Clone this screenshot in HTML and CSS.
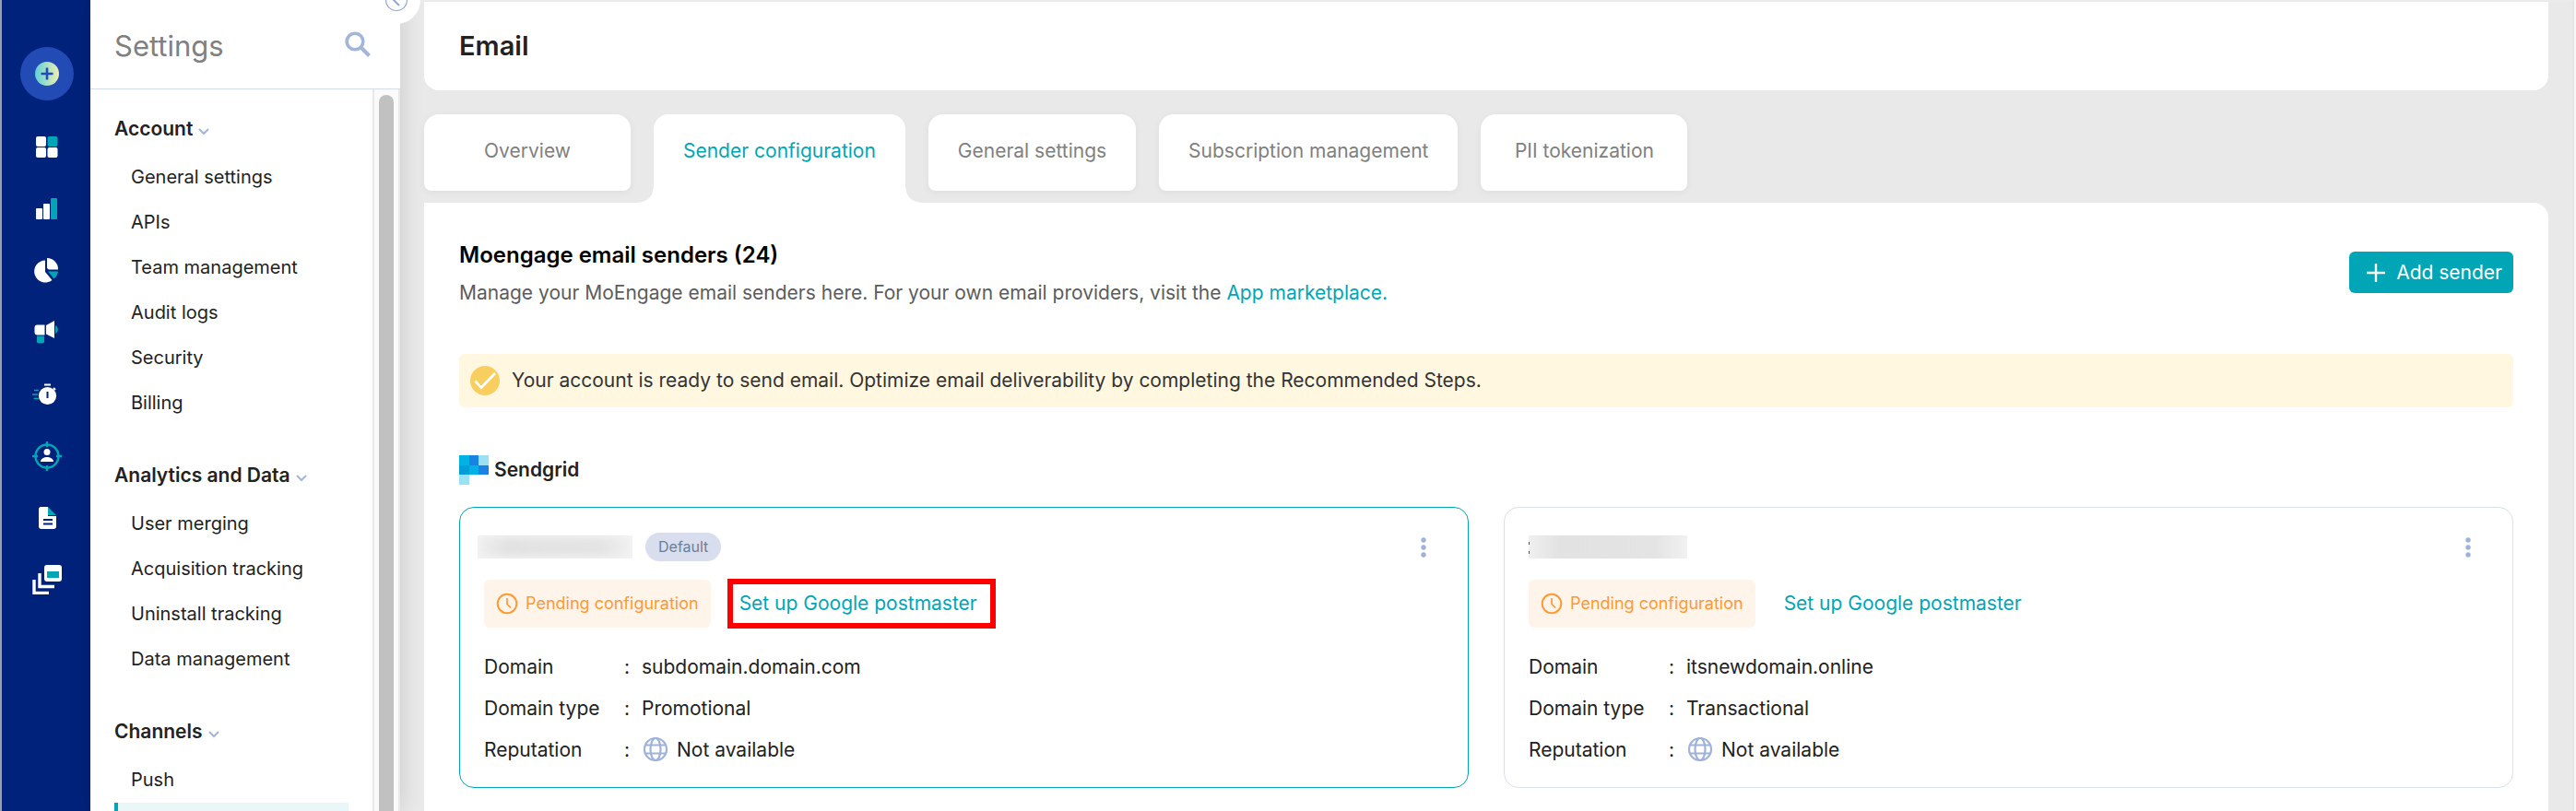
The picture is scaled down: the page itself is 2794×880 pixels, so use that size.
FILE: index.html
```html
<!DOCTYPE html>
<html lang="en">
<head>
<meta charset="utf-8">
<title>Email settings</title>
<link rel="stylesheet" href="styles.css">
</head>
<body>
<div class="app">
  <nav class="rail" aria-label="Main">
    <button class="rail-create" aria-label="Create">
      <svg width="26" height="26" viewBox="0 0 26 26"><defs><linearGradient id="mint" x1="0" x2="1"><stop offset="0" stop-color="#5fd0d8"/><stop offset="1" stop-color="#f0efb0"/></linearGradient></defs><circle cx="13" cy="13" r="13" fill="url(#mint)"/><path d="M13 6.500v13M6.500 13h13" stroke="#234bb5" stroke-width="2.600"/></svg>
    </button>
    <a class="rail-link" href="#" aria-label="Dashboard"><svg width="32" height="32" viewBox="0 0 32 32"><g fill="#fff"><rect x="4" y="4" width="11" height="11" rx="2"/><rect x="4" y="16" width="11" height="11" rx="2"/><rect x="16.500" y="16" width="11" height="11" rx="2"/></g><rect x="16.500" y="4" width="11" height="11" rx="2" fill="#00a6b6"/></svg></a>
    <a class="rail-link" href="#" aria-label="Analyze"><svg width="32" height="32" viewBox="0 0 32 32"><path d="M5 15h5a1 1 0 0 1 1 1v10a1 1 0 0 1-1 1H5a1 1 0 0 1-1-1V16a1 1 0 0 1 1-1zM13 10h5a1 1 0 0 1 1 1v15a1 1 0 0 1-1 1h-5a1 1 0 0 1-1-1V11a1 1 0 0 1 1-1z" fill="#fff"/><rect x="20" y="4" width="7" height="23" rx="1" fill="#00a6b6"/></svg></a>
    <a class="rail-link" href="#" aria-label="Segment"><svg width="32" height="32" viewBox="0 0 32 32"><path d="M14 4.500A12 12 0 1 0 21.500 26L14 17z" fill="#fff"/><path d="M16 2a12 12 0 0 1 12 12.500H18a3 3 0 0 1-2-2z" fill="#fff"/><path d="M17 16.500h11a12 12 0 0 1-4.500 8z" fill="#00a6b6"/></svg></a>
    <a class="rail-link" href="#" aria-label="Engage"><svg width="32" height="32" viewBox="0 0 32 32"><path d="M13.500 7.500v11H5.500a3 3 0 0 1-3-3v-5a3 3 0 0 1 3-3zM15 8L24 3v19l-9-4.500z" fill="#fff"/><path d="M25 8a5 5 0 0 1 0 9z" fill="#00a6b6"/><path d="M5 19.500h8v6a2 2 0 0 1-2 2H7a2 2 0 0 1-2-2z" fill="#00a6b6"/></svg></a>
    <a class="rail-link" href="#" aria-label="Flows"><svg width="32" height="32" viewBox="0 0 32 32"><circle cx="16.500" cy="17.500" r="9.600" fill="#fff"/><path d="M13 5.500h7" stroke="#fff" stroke-width="2"/><path d="M23 9l2 2" stroke="#fff" stroke-width="2"/><path d="M16.500 13v7" stroke="#00227b" stroke-width="2"/><path d="M2 11.500h5M0 16h6M1.500 20.500h5.500" stroke="#00a6b6" stroke-width="1.600"/></svg></a>
    <a class="rail-link" href="#" aria-label="Personalize"><svg width="32" height="32" viewBox="0 0 32 32"><circle cx="16" cy="16" r="12.500" fill="none" stroke="#00a6b6" stroke-width="2.400"/><path d="M16 0v6M16 26v6M0 16h6M26 16h6" stroke="#00a6b6" stroke-width="2.400"/><circle cx="16" cy="11.500" r="3.500" fill="#fff"/><path d="M9 22c0-3.500 4-5 7-5s7 1.500 7 5z" fill="#fff"/></svg></a>
    <a class="rail-link" href="#" aria-label="Content"><svg width="32" height="32" viewBox="0 0 32 32"><path d="M9.500 4H17v10h9v11a3 3 0 0 1-3 3H10a3 3 0 0 1-3-3V6.500A2.500 2.500 0 0 1 9.500 4z" fill="#fff"/><path d="M17 4l9 9h-9z" fill="#00a6b6"/><path d="M12 18h10M12 22.500h10" stroke="#00227b" stroke-width="1.800"/></svg></a>
    <a class="rail-link" href="#" aria-label="Cards"><svg width="32" height="32" viewBox="0 0 32 32"><rect x="13" y="0" width="19" height="18" rx="3" fill="#fff"/><rect x="16" y="7" width="13" height="7" fill="#00a6b6"/><path d="M8 9v14.500h16M2 16v14.500h16" fill="none" stroke="#fff" stroke-width="3.400"/></svg></a>
  </nav>

  <aside class="sidebar">
    <header class="side-head">
      <h2 class="side-title">Settings</h2>
      <button class="icon-btn" aria-label="Search settings"><svg width="28" height="28" viewBox="0 0 28 28" fill="none" stroke="#a3b6da"><circle cx="11" cy="11" r="8.800" stroke-width="3.600"/><path d="M17.500 17.500L26.500 26.500" stroke-width="4"/></svg></button>
    </header>
    <div class="side-body">
      <div class="side-list">
        <section class="side-group">
          <h3 class="group-title">Account <svg width="12" height="8" viewBox="0 0 12 8"><path d="M1 1l5 5 5-5"/></svg></h3>
          <a class="side-link" href="#">General settings</a>
          <a class="side-link" href="#">APIs</a>
          <a class="side-link" href="#">Team management</a>
          <a class="side-link" href="#">Audit logs</a>
          <a class="side-link" href="#">Security</a>
          <a class="side-link" href="#">Billing</a>
        </section>
        <section class="side-group">
          <h3 class="group-title">Analytics and Data <svg width="12" height="8" viewBox="0 0 12 8"><path d="M1 1l5 5 5-5"/></svg></h3>
          <a class="side-link" href="#">User merging</a>
          <a class="side-link" href="#">Acquisition tracking</a>
          <a class="side-link" href="#">Uninstall tracking</a>
          <a class="side-link" href="#">Data management</a>
        </section>
        <section class="side-group">
          <h3 class="group-title">Channels <svg width="12" height="8" viewBox="0 0 12 8"><path d="M1 1l5 5 5-5"/></svg></h3>
          <a class="side-link" href="#">Push</a>
          <span class="side-link side-link-active"></span>
        </section>
      </div>
      <div class="scroll-track"><div class="scroll-thumb"></div></div>
    </div>
    <button class="collapse" aria-label="Collapse settings"><svg width="26" height="26" viewBox="0 0 26 26" fill="none" stroke="#93a6d3"><circle cx="13" cy="13" r="11.500" stroke-width="1.200"/><path d="M16 7l-6 6 6 6" stroke-width="2"/></svg></button>
  </aside>

  <main class="main">
    <header class="page-head"><h1 class="page-title">Email</h1></header>
    <nav class="tabs" aria-label="Email settings">
      <a class="tab" href="#">Overview</a>
      <a class="tab tab-active" href="#">Sender configuration</a>
      <a class="tab" href="#">General settings</a>
      <a class="tab" href="#">Subscription management</a>
      <a class="tab" href="#">PII tokenization</a>
    </nav>
    <section class="panel">
      <div class="intro">
        <div>
          <h2 class="intro-title">Moengage email senders (24)</h2>
          <p class="intro-text">Manage your MoEngage email senders here. For your own email providers, visit the <a class="link" href="#">App marketplace.</a></p>
        </div>
        <button class="add-btn"><svg width="20" height="20" viewBox="0 0 20 20"><path d="M10 0v20M0 10h20" stroke="#fff" stroke-width="2.400"/></svg>Add sender</button>
      </div>
      <div class="notice" role="status">
        <svg width="32" height="32" viewBox="0 0 32 32"><circle cx="16" cy="16" r="16" fill="#f8cf5f"/><path d="M5.500 16.500l6.500 7L27 8" fill="none" stroke="#fff" stroke-width="2.600"/></svg>
        <span>Your account is ready to send email. Optimize email deliverability by completing the Recommended Steps.</span>
      </div>
      <h3 class="provider">
        <svg width="32" height="32" viewBox="0 0 32 32" shape-rendering="crispEdges"><path d="M21 0h11v11H21zM0 21h11v11H0z" fill="#99e1f4"/><path d="M0 0h11v11H0z" fill="#00b2e3"/><path d="M11 11h10v10H11z" fill="#00b2e3"/><path d="M0 11h11v10H0z" fill="#009dd9"/><path d="M11 0h10v11H11zM21 11h11v10H21z" fill="#1a82e2"/></svg>
        Sendgrid
      </h3>
      <div class="cards">
        <article class="card card-default">
          <div class="card-head">
            <span class="masked masked-wide"></span>
            <span class="badge">Default</span>
            <button class="icon-btn menu" aria-label="Sender options"><svg width="6" height="22" viewBox="0 0 6 22" fill="#9fb2d8"><circle cx="3" cy="3" r="2.700"/><circle cx="3" cy="11" r="2.700"/><circle cx="3" cy="19" r="2.700"/></svg></button>
          </div>
          <div class="card-status">
            <span class="pending"><svg width="24" height="24" viewBox="0 0 24 24" fill="none" stroke="#ff9933"><circle cx="12" cy="12" r="10.300" stroke-width="2"/><path d="M12 6v6.500l4 4" stroke-width="1.700"/></svg>Pending configuration</span>
            <span class="setup"><a class="link" href="#">Set up Google postmaster</a><span class="highlight"></span></span>
          </div>
          <dl class="facts">
            <dt>Domain</dt><dd>subdomain.domain.com</dd>
            <dt>Domain type</dt><dd>Promotional</dd>
            <dt>Reputation</dt><dd><svg width="30" height="28" viewBox="-1 0 30 28" fill="none" stroke="#9fb2d8" stroke-width="2.200"><circle cx="14" cy="13" r="12"/><ellipse cx="14" cy="13" rx="5.500" ry="12"/><path d="M3 8.500h22M3 17.500h22"/></svg>Not available</dd>
          </dl>
        </article>
        <article class="card">
          <div class="card-head">
            <span class="masked masked-peek"></span>
            <button class="icon-btn menu" aria-label="Sender options"><svg width="6" height="22" viewBox="0 0 6 22" fill="#9fb2d8"><circle cx="3" cy="3" r="2.700"/><circle cx="3" cy="11" r="2.700"/><circle cx="3" cy="19" r="2.700"/></svg></button>
          </div>
          <div class="card-status">
            <span class="pending"><svg width="24" height="24" viewBox="0 0 24 24" fill="none" stroke="#ff9933"><circle cx="12" cy="12" r="10.300" stroke-width="2"/><path d="M12 6v6.500l4 4" stroke-width="1.700"/></svg>Pending configuration</span>
            <span class="setup"><a class="link" href="#">Set up Google postmaster</a></span>
          </div>
          <dl class="facts">
            <dt>Domain</dt><dd>itsnewdomain.online</dd>
            <dt>Domain type</dt><dd>Transactional</dd>
            <dt>Reputation</dt><dd><svg width="30" height="28" viewBox="-1 0 30 28" fill="none" stroke="#9fb2d8" stroke-width="2.200"><circle cx="14" cy="13" r="12"/><ellipse cx="14" cy="13" rx="5.500" ry="12"/><path d="M3 8.500h22M3 17.500h22"/></svg>Not available</dd>
          </dl>
        </article>
      </div>
    </section>
  </main>
</div>
</body>
</html>
```
FILE: styles.css
```css
* { box-sizing: border-box; }

body {
  margin: 0;
  font-family: Inter, "Liberation Sans", sans-serif;
  font-size: 21px;
  line-height: 32px;
  color: #222;
  background: #e9e9e9;
}

h1, h2, h3, p, dl, dd { margin: 0; }
a { text-decoration: none; }
svg { flex: none; display: block; }
button { border: 0; padding: 0; background: none; font: inherit; cursor: pointer; }

.app {
  display: flex;
  height: 100vh;
  overflow: hidden;
  border-left: 2px solid #9a9fa8;
  border-right: 2px solid #f7f7f7;
}

/* Icon rail */
.rail {
  flex: none;
  width: 96px;
  padding: 51px 0 0 2px;
  display: flex;
  flex-direction: column;
  align-items: center;
  background: #00227b;
}
.rail-create {
  flex: none;
  width: 58px;
  height: 58px;
  margin-bottom: 17px;
  border-radius: 50%;
  display: grid;
  place-items: center;
  background: #234bb5;
}
.rail-link {
  flex: none;
  width: 100%;
  height: 67px;
  display: grid;
  place-items: center;
}

/* Settings sidebar */
.sidebar {
  position: relative;
  z-index: 1;
  flex: none;
  width: 336px;
  display: flex;
  flex-direction: column;
  background: #fff;
  box-shadow: 0 0 24px rgba(0, 0, 0, 0.14);
}
.side-head {
  flex: none;
  height: 97px;
  padding: 0 32px 0 26px;
  display: flex;
  align-items: center;
  justify-content: space-between;
  border-bottom: 1px solid #d3dcec;
}
.side-title { padding-top: 4px; font-size: 31px; font-weight: 400; color: #808080; }
.icon-btn { display: grid; place-items: center; }
.side-body { flex: 1; min-height: 0; display: flex; }
.side-list { flex: 1; padding: 27px 26px 0; overflow: hidden; }
.side-group { margin-bottom: 38px; }
.group-title {
  display: flex;
  align-items: center;
  gap: 6px;
  margin-bottom: 12px;
  font-size: 21px;
  font-weight: 600;
}
.group-title svg { margin-top: 5px; fill: none; stroke: #a3b6da; stroke-width: 2; }
.side-link {
  display: block;
  padding-left: 18px;
  font-size: 20px;
  line-height: 49px;
  color: #222;
}
.side-link-active {
  height: 49px;
  border-left: 4px solid #00a6b6;
  background: #e9f7f8;
}
.scroll-track {
  width: 30px;
  padding-top: 6px;
  border: 2px solid #e8e8e8;
  border-width: 0 2px;
  background: #fafafa;
}
.scroll-thumb {
  width: 16px;
  height: 100%;
  margin: 0 auto;
  border-radius: 8px 8px 0 0;
  background: #c1c1c1;
}
.collapse {
  position: absolute;
  top: -26px;
  right: -22px;
  width: 52px;
  height: 52px;
  border-radius: 50%;
  display: grid;
  place-items: center;
  background: #fff;
}

/* Main area */
.main {
  flex: 1;
  min-width: 0;
  padding: 0 26px;
  display: flex;
  flex-direction: column;
  border-top: 2px solid #ebebeb;
  border-right: 2px solid #e4e4e4;
}
.page-head {
  flex: none;
  padding: 32px 38px;
  border-radius: 0 0 16px 16px;
  background: #fff;
}
.page-title { font-size: 29px; font-weight: 600; }

.tabs { flex: none; display: flex; gap: 25px; margin-top: 26px; }
.tab {
  min-width: 224px;
  height: 83px;
  margin-bottom: 13px;
  padding: 24px 32px;
  border-radius: 16px 16px 8px 8px;
  text-align: center;
  color: #808080;
  background: #fff;
  box-shadow: 0 2px 8px rgba(0, 0, 0, 0.05);
}
.tab-active {
  position: relative;
  height: auto;
  margin-bottom: 0;
  border-radius: 16px 16px 0 0;
  color: #00a6b6;
  box-shadow: none;
}
.tab-active::before,
.tab-active::after {
  content: "";
  position: absolute;
  bottom: 0;
  width: 16px;
  height: 16px;
}
.tab-active::before { right: 100%; background: radial-gradient(circle at 0 0, transparent 15px, #fff 16px); }
.tab-active::after { left: 100%; background: radial-gradient(circle at 100% 0, transparent 15px, #fff 16px); }

.panel {
  flex: 1;
  padding: 37px 38px 24px;
  border-radius: 0 16px 0 0;
  background: #fff;
}
.intro { display: flex; align-items: center; justify-content: space-between; }
.intro-title { margin-bottom: 5px; font-size: 24px; line-height: 40px; font-weight: 600; color: #000; }
.intro-text { color: #5c5c5c; }
.link { color: #00a6b6; }
.add-btn {
  height: 45px;
  padding: 0 12px 0 19px;
  display: flex;
  align-items: center;
  gap: 12px;
  border-radius: 6px;
  color: #fff;
  background: #00a6b6;
}
.notice {
  min-height: 58px;
  margin-top: 50px;
  padding: 0 12px;
  display: flex;
  align-items: center;
  gap: 13px;
  border-radius: 6px;
  color: #333;
  background: #fff7e0;
}
.provider {
  margin: 52px 0 24px;
  display: flex;
  align-items: center;
  gap: 6px;
  font-size: 21px;
  font-weight: 600;
}

/* Sender cards */
.cards { display: grid; grid-template-columns: 1fr 1fr; gap: 38px; }
.card {
  padding: 27px 26px 18px;
  border: 1px solid #d9e0ec;
  border-radius: 16px;
}
.card-default { border-color: #00a6b6; }
.card-head { height: 31px; display: flex; align-items: center; gap: 14px; }
.masked {
  width: 172px;
  height: 25px;
  background: linear-gradient(90deg, #efefef, #e2e2e2 20%, #e4e4e4 80%, #f1f1f1);
  box-shadow: inset 0 0 8px 2px #f3f3f3;
}
.masked-wide {
  width: 168px;
  margin-left: -7px;
}
.masked-peek {
  background:
    linear-gradient(#555, #555) 0 7px / 1px 3px no-repeat,
    linear-gradient(#555, #555) 0 17px / 1px 3px no-repeat,
    linear-gradient(90deg, #efefef, #e2e2e2 20%, #e4e4e4 80%, #f1f1f1);
  box-shadow: none;
}
.badge {
  padding: 0 14px;
  border-radius: 16px;
  font-size: 16px;
  line-height: 31px;
  color: #6c7d9e;
  background: #d8deed;
}
.menu { width: 24px; height: 31px; margin: 0 10px 0 auto; }
.card-status { display: flex; align-items: center; gap: 31px; margin: 20px 0; }
.pending {
  height: 52px;
  padding: 0 13px;
  display: flex;
  align-items: center;
  gap: 8px;
  border-radius: 6px;
  font-size: 18px;
  color: #ff9933;
  background: #fff4ea;
}
.setup { position: relative; }
.highlight {
  position: absolute;
  inset: -11px -20px -11px -13px;
  border: 6px solid #ff0000;
  pointer-events: none;
}
.facts {
  display: grid;
  grid-template-columns: 152px 1fr;
  line-height: 45px;
}
.facts dd { display: flex; align-items: center; gap: 8px; }
.facts dd::before { content: ":"; width: 11px; }
```
